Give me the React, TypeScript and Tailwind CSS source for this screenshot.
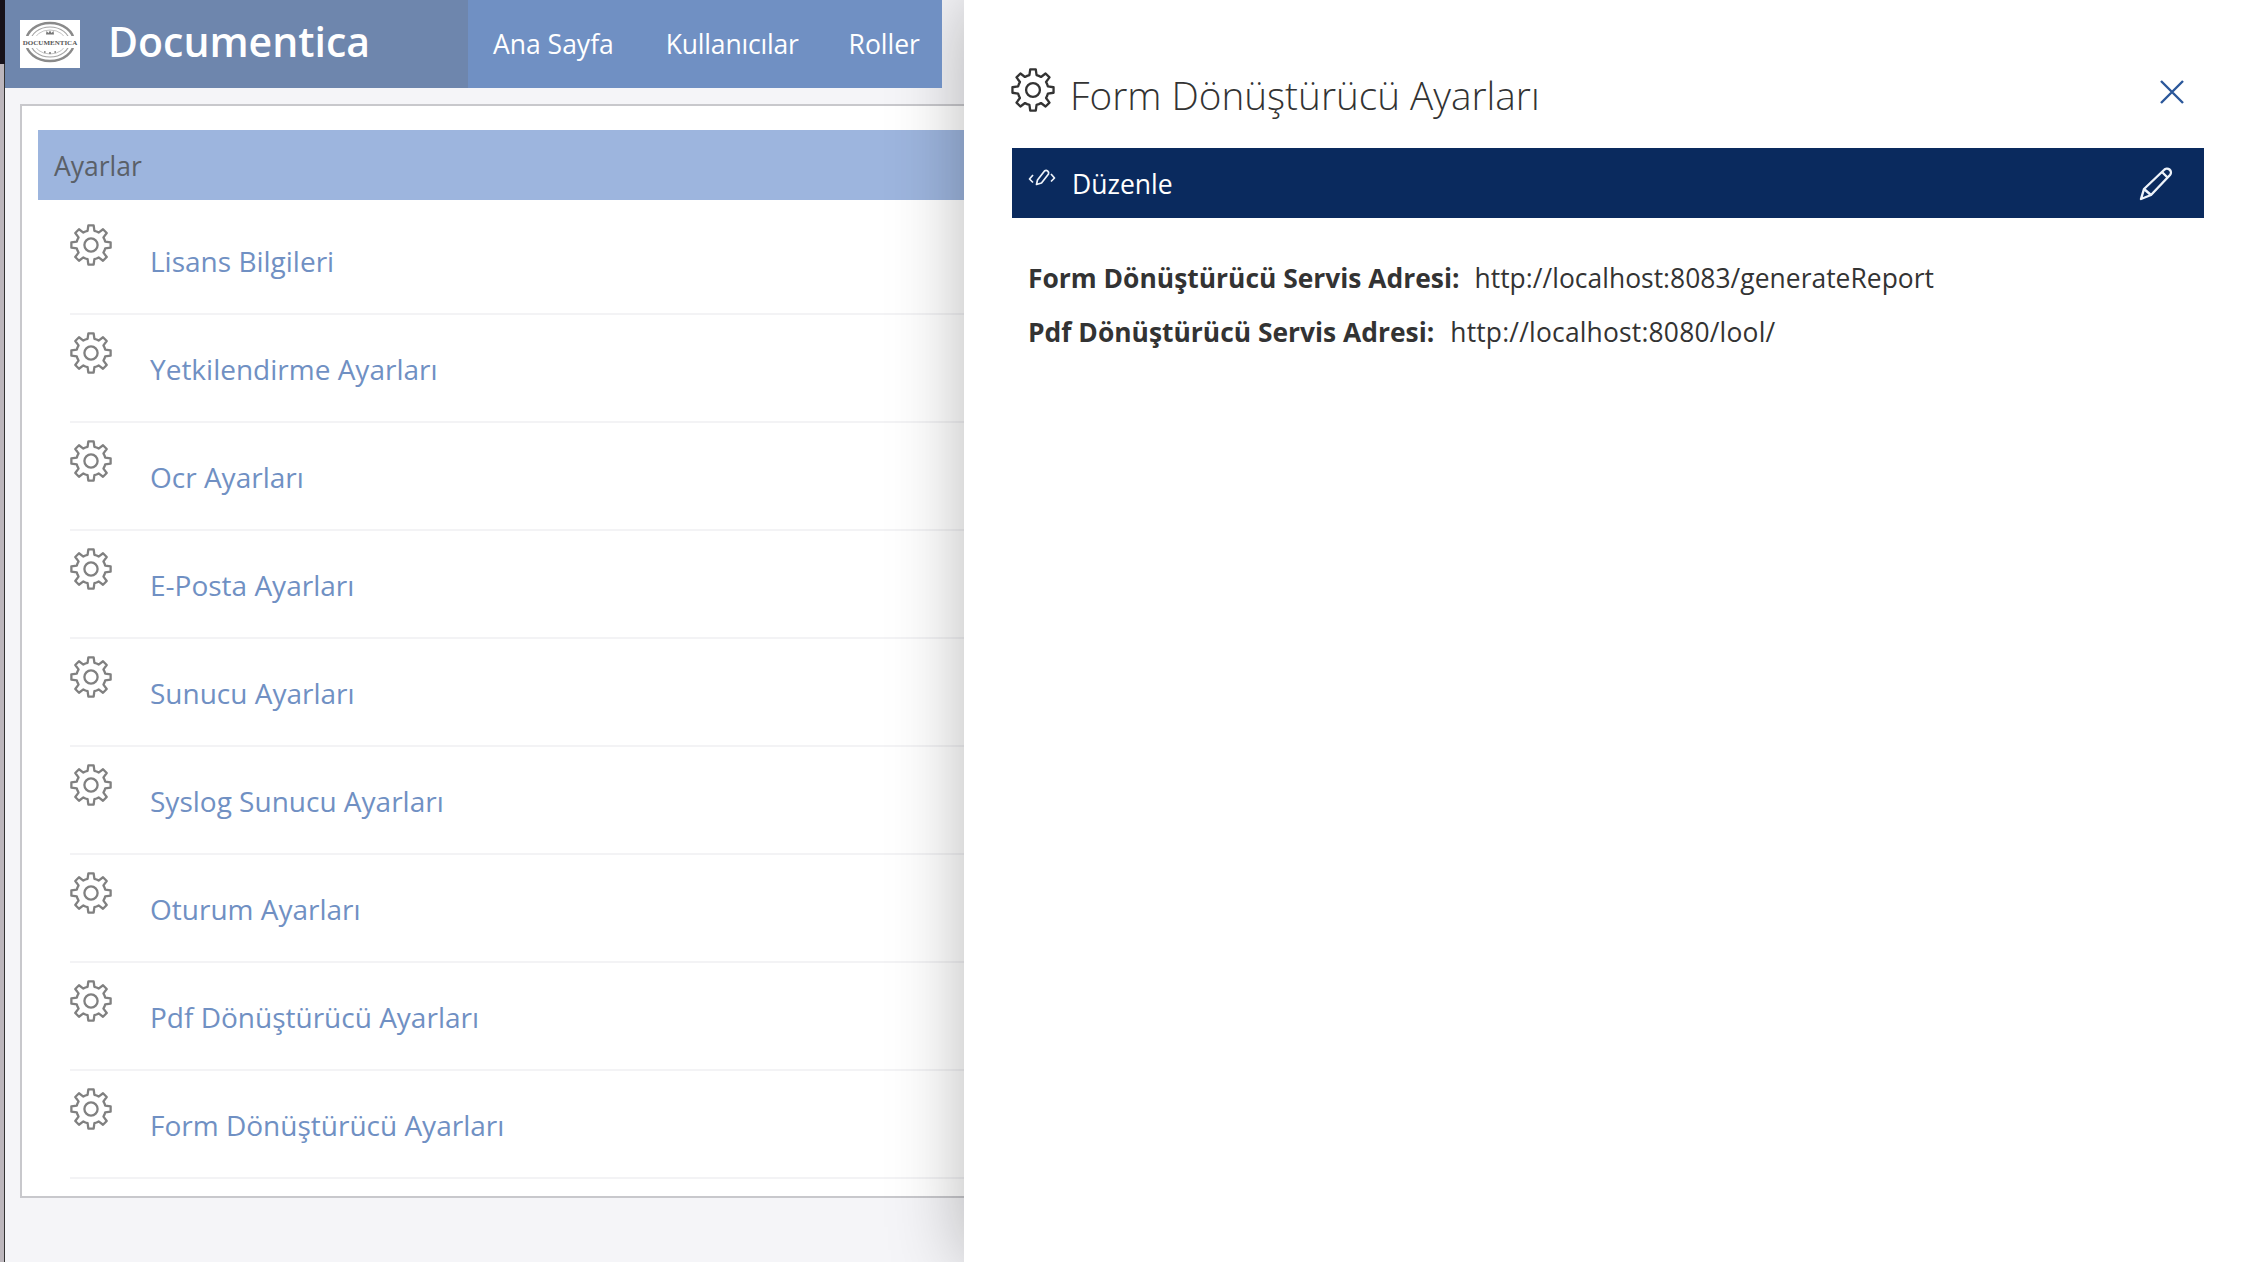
import React from "react";

function gearPath(cx: number, cy: number, ro: number, ri: number) {
  const pts: string[] = [];
  const n = 8;
  for (let i = 0; i < n; i++) {
    const a = (i / n) * Math.PI * 2 - Math.PI / 2;
    const step = (Math.PI * 2) / n;
    const seq: [number, number][] = [
      [ri, a - step * 0.5],
      [ri, a - step * 0.3],
      [ro, a - step * 0.17],
      [ro, a + step * 0.17],
      [ri, a + step * 0.3],
    ];
    for (const [r, t] of seq) {
      pts.push(`${(cx + r * Math.cos(t)).toFixed(2)} ${(cy + r * Math.sin(t)).toFixed(2)}`);
    }
  }
  return "M" + pts.join("L") + "Z";
}

function Gear({ size = 42, color = "#808080", sw = 2.3 }: { size?: number; color?: string; sw?: number }) {
  return (
    <svg width={size} height={size} viewBox="0 0 42 42" fill="none" stroke={color} strokeWidth={sw} strokeLinejoin="round" className="shrink-0">
      <path d={gearPath(21, 21, 19.8, 14.6)} />
      <circle cx="21" cy="21" r="6.6" />
    </svg>
  );
}

function Logo() {
  return (
    <div className="w-[60px] h-[48px] bg-white shrink-0">
      <svg width="60" height="48" viewBox="0 0 60 48" fill="none">
        <ellipse cx="30" cy="22" rx="24" ry="19" stroke="#8a8a8a" strokeWidth="2.4" />
        <ellipse cx="30" cy="22" rx="19.5" ry="15" stroke="#a5a5a5" strokeWidth="1.2" />
        <ellipse cx="30" cy="22" rx="16" ry="12" stroke="#b5b5b5" strokeWidth="0.8" />
        <rect x="0" y="16" width="60" height="12" fill="#fff" />
        <path d="M26 14.5 L26.5 11 L28.5 13 L30 10.5 L31.5 13 L33.5 11 L34 14.5 Z" fill="#777" />
        <path d="M24 32 h1.6 M29 33 h2 M34.4 32 h1.6" stroke="#777" strokeWidth="1.4" />
        <text x="30" y="25" textAnchor="middle" fontFamily="Liberation Serif, serif" fontWeight="700" fontSize="7" fill="#555">DOCUMENTICA</text>
      </svg>
    </div>
  );
}

const rows = [
  "Lisans Bilgileri",
  "Yetkilendirme Ayarları",
  "Ocr Ayarları",
  "E-Posta Ayarları",
  "Sunucu Ayarları",
  "Syslog Sunucu Ayarları",
  "Oturum Ayarları",
  "Pdf Dönüştürücü Ayarları",
  "Form Dönüştürücü Ayarları",
];

export default function App() {
  return (
    <div className="flex w-[2250px] h-[1262px] overflow-hidden bg-white font-['Open_Sans',sans-serif]">
      <div className="w-[5px] shrink-0 flex flex-col">
        <div className="h-[64px] bg-[#17121a]" />
        <div className="flex-1 bg-[#bcb6bc] border-r-[1px] border-[#333]" />
      </div>
      <div className="w-[959px] shrink-0 bg-[#f5f5f8] flex flex-col">
        <header className="relative z-20 flex h-[88px] w-[937px] shrink-0 bg-[#7090c3]">
          <div className="flex items-center w-[463px] h-full bg-[#6e86ad] pl-[15px]">
            <Logo />
            <span className="ml-[28px] text-[41px] font-semibold leading-none text-white pb-[6px]">Documentica</span>
          </div>
          <nav className="flex items-center text-[26.5px] text-white pt-[2px]">
            <span className="ml-[25px]">Ana Sayfa</span>
            <span className="ml-[52px] tracking-[-0.2px]">Kullanıcılar</span>
            <span className="ml-[50px]">Roller</span>
          </nav>
        </header>
        <main className="mt-[16px] ml-[15px] h-[1094px] border-[2px] border-r-0 border-[#c8c8cc] bg-white pt-[24px] pl-[16px] overflow-hidden">
          <div className="h-[70px] bg-[#9db5de] flex items-center pl-[16px] pt-[4px] text-[26.5px] text-[#5a6068]">Ayarlar</div>
          <ul className="pt-[7px] pl-[32px]">
            {rows.map((r) => (
              <li key={r} className="flex h-[108px] border-b-[2px] border-[#f3f3f5]">
                <div className="pt-[17px] w-[80px] shrink-0">
                  <Gear />
                </div>
                <div className="pt-[34px] text-[28px] leading-[40px] text-[#7090c3]">{r}</div>
              </li>
            ))}
          </ul>
        </main>
      </div>
      <aside className="relative z-10 flex-1 bg-white shadow-[0_0_70px_rgba(0,0,0,0.28)] pl-[48px] pr-[46px]">
        <div className="flex h-[148px] items-start">
          <div className="mt-[68px] -ml-[1px]">
            <Gear size={44} color="#333" sw={2.2} />
          </div>
          <h1 className="ml-[15px] mt-[67px] text-[38.7px] font-light leading-[56px] text-[#333]">Form Dönüştürücü Ayarları</h1>
          <button className="ml-auto mr-[18px] mt-[78px]">
            <svg width="28" height="28" viewBox="0 0 28 28" stroke="#2b579a" strokeWidth="2.4" fill="none">
              <path d="M3 3 L25 25 M25 3 L3 25" />
            </svg>
          </button>
        </div>
        <div className="flex items-center h-[70px] bg-[#0a2a5e] text-white pl-[16px] pr-[30px]">
          <svg width="28" height="20" viewBox="0 0 28 20" fill="none" stroke="#eef3fa" strokeWidth="1.7" strokeLinejoin="round" className="mb-[10px] shrink-0">
            <path d="M5 7 L1.5 11 L5 14.5 M23 6 L26.5 10 L23 13.5" />
            <path d="M8.5 16.5 L9.5 12 L16.5 3 A2.6 2.6 0 0 1 20.5 6 L13.5 15 Z" />
          </svg>
          <span className="ml-[16px] text-[26.5px] pt-[4px]">Düzenle</span>
          <svg width="36" height="36" viewBox="0 0 36 36" fill="none" stroke="#eef3fa" strokeWidth="2.4" strokeLinejoin="round" className="ml-auto mt-[2px] shrink-0">
            <path d="M3 33 L6 23 L26 4 A3.5 3.5 0 0 1 32 9 L13 29 Z M6 23 L13 29 M24 6 L30 12" />
          </svg>
        </div>
        <div className="pl-[16px] pt-[34px] text-[26.4px] text-[#333] leading-[53px]">
          <div className="flex">
            <b className="font-bold mr-[15px]">Form Dönüştürücü Servis Adresi:</b>
            <span className="tracking-[0.04px]">http://localhost:8083/generateReport</span>
          </div>
          <div className="flex mt-[1px]">
            <b className="font-bold mr-[16px]">Pdf Dönüştürücü Servis Adresi:</b>
            <span className="tracking-[0.2px]">http://localhost:8080/lool/</span>
          </div>
        </div>
      </aside>
    </div>
  );
}
